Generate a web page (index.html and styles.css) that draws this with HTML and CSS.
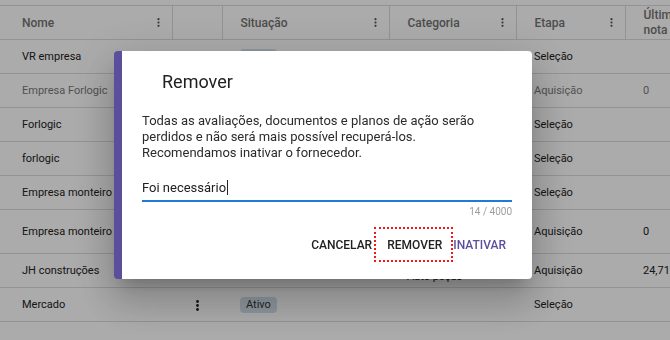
FILE: index.html
```html
<!DOCTYPE html>
<html lang="pt-BR">
<head>
    <meta charset="UTF-8">
    <meta name="viewport" content="width=device-width, initial-scale=1.0">
    <title>Fornecedores</title>
    <link rel="stylesheet" href="styles.css">
</head>
<body>
    <div class="page">
        <table class="grid">
            <colgroup>
                <col class="c-name">
                <col class="c-menu">
                <col class="c-status">
                <col class="c-cat">
                <col class="c-step">
                <col class="c-grade">
            </colgroup>
            <thead>
                <tr>
                    <th class="first"><div class="head">Nome <svg class="dots" viewBox="0 0 3 9"><circle cx="1.5" cy="1.2" r="1.1"/><circle cx="1.5" cy="4.5" r="1.1"/><circle cx="1.5" cy="7.8" r="1.1"/></svg></div></th>
                    <th></th>
                    <th><div class="head">Situação <svg class="dots" viewBox="0 0 3 9"><circle cx="1.5" cy="1.2" r="1.1"/><circle cx="1.5" cy="4.5" r="1.1"/><circle cx="1.5" cy="7.8" r="1.1"/></svg></div></th>
                    <th><div class="head">Categoria <svg class="dots" viewBox="0 0 3 9"><circle cx="1.5" cy="1.2" r="1.1"/><circle cx="1.5" cy="4.5" r="1.1"/><circle cx="1.5" cy="7.8" r="1.1"/></svg></div></th>
                    <th><div class="head">Etapa <svg class="dots" viewBox="0 0 3 9"><circle cx="1.5" cy="1.2" r="1.1"/><circle cx="1.5" cy="4.5" r="1.1"/><circle cx="1.5" cy="7.8" r="1.1"/></svg></div></th>
                    <th><div class="head-wrap">Última nota</div></th>
                </tr>
            </thead>
            <tbody>
                <tr>
                    <td class="first">VR empresa</td>
                    <td class="menu"><svg class="kebab" viewBox="0 0 3 11"><circle cx="1.5" cy="1.5" r="1.4"/><circle cx="1.5" cy="5.5" r="1.4"/><circle cx="1.5" cy="9.5" r="1.4"/></svg></td>
                    <td><span class="pill">Ativo</span></td>
                    <td>Serviços</td>
                    <td>Seleção</td>
                    <td></td>
                </tr>
                <tr class="inactive">
                    <td class="first">Empresa Forlogic</td>
                    <td class="menu"><svg class="kebab" viewBox="0 0 3 11"><circle cx="1.5" cy="1.5" r="1.4"/><circle cx="1.5" cy="5.5" r="1.4"/><circle cx="1.5" cy="9.5" r="1.4"/></svg></td>
                    <td><span class="pill">Inativo</span></td>
                    <td>Serviços</td>
                    <td>Aquisição</td>
                    <td>0</td>
                </tr>
                <tr>
                    <td class="first">Forlogic</td>
                    <td class="menu"><svg class="kebab" viewBox="0 0 3 11"><circle cx="1.5" cy="1.5" r="1.4"/><circle cx="1.5" cy="5.5" r="1.4"/><circle cx="1.5" cy="9.5" r="1.4"/></svg></td>
                    <td><span class="pill">Ativo</span></td>
                    <td>Software</td>
                    <td>Seleção</td>
                    <td></td>
                </tr>
                <tr>
                    <td class="first">forlogic</td>
                    <td class="menu"><svg class="kebab" viewBox="0 0 3 11"><circle cx="1.5" cy="1.5" r="1.4"/><circle cx="1.5" cy="5.5" r="1.4"/><circle cx="1.5" cy="9.5" r="1.4"/></svg></td>
                    <td><span class="pill">Ativo</span></td>
                    <td>Software</td>
                    <td>Seleção</td>
                    <td></td>
                </tr>
                <tr>
                    <td class="first">Empresa monteiro</td>
                    <td class="menu"><svg class="kebab" viewBox="0 0 3 11"><circle cx="1.5" cy="1.5" r="1.4"/><circle cx="1.5" cy="5.5" r="1.4"/><circle cx="1.5" cy="9.5" r="1.4"/></svg></td>
                    <td><span class="pill">Ativo</span></td>
                    <td>Materiais</td>
                    <td>Seleção</td>
                    <td></td>
                </tr>
                <tr class="tall">
                    <td class="first">Empresa monteiro</td>
                    <td class="menu"><svg class="kebab" viewBox="0 0 3 11"><circle cx="1.5" cy="1.5" r="1.4"/><circle cx="1.5" cy="5.5" r="1.4"/><circle cx="1.5" cy="9.5" r="1.4"/></svg></td>
                    <td><span class="pill">Ativo</span></td>
                    <td>Materiais de construção</td>
                    <td>Aquisição</td>
                    <td>0</td>
                </tr>
                <tr>
                    <td class="first">JH construções</td>
                    <td class="menu"><svg class="kebab" viewBox="0 0 3 11"><circle cx="1.5" cy="1.5" r="1.4"/><circle cx="1.5" cy="5.5" r="1.4"/><circle cx="1.5" cy="9.5" r="1.4"/></svg></td>
                    <td><span class="pill">Ativo</span></td>
                    <td class="low">Auto peças</td>
                    <td>Aquisição</td>
                    <td>24,71</td>
                </tr>
                <tr>
                    <td class="first">Mercado</td>
                    <td class="menu"><svg class="kebab" viewBox="0 0 3 11"><circle cx="1.5" cy="1.5" r="1.4"/><circle cx="1.5" cy="5.5" r="1.4"/><circle cx="1.5" cy="9.5" r="1.4"/></svg></td>
                    <td><span class="pill">Ativo</span></td>
                    <td></td>
                    <td>Seleção</td>
                    <td></td>
                </tr>
            </tbody>
        </table>
    </div>

    <!-- Diálogo de remoção -->
    <div class="backdrop">
        <div class="dialog">
            <h3 class="dialog-title">Remover</h3>
            <p class="dialog-text">Todas as avaliações, documentos e planos de ação serão perdidos e não será mais possível recuperá-los. Recomendamos inativar o fornecedor.</p>
            <div class="field">Foi necessário<span class="caret"></span></div>
            <div class="counter">14 / 4000</div>
            <div class="actions">
                <button class="btn">Cancelar</button>
                <button class="btn btn-focus">Remover</button>
                <button class="btn btn-primary">Inativar</button>
            </div>
        </div>
    </div>
</body>
</html>
```

FILE: styles.css
```css
body {
    margin: 0;
    width: 670px;
    height: 340px;
    overflow: hidden;
    background-color: #fff;
    font-family: Roboto, "Liberation Sans", sans-serif;
    color: #212121;
}
.page {
    padding-top: 5px;
}
.grid {
    border-collapse: collapse;
    table-layout: fixed;
    width: 720px;
}
.c-name { width: 172px; }
.c-menu { width: 50px; }
.c-status { width: 167px; }
.c-cat { width: 127px; }
.c-step { width: 109px; }
.c-grade { width: 95px; }
th {
    height: 33px;
    padding: 0 12px 0 18px;
    border-top: 1px solid #dcdcdc;
    border-bottom: 1px solid #dcdcdc;
    border-left: 1px solid #dcdcdc;
    text-align: left;
    font-size: 12px;
    font-weight: 500;
    color: #737373;
}
th.first {
    border-left: none;
    padding-left: 22px;
}
.head {
    display: flex;
    justify-content: space-between;
    align-items: center;
}
.head-wrap {
    width: 30px;
    line-height: 15px;
}
.dots {
    width: 3px;
    height: 9px;
    fill: #555;
}
td {
    height: 33px;
    padding: 0 18px;
    border-bottom: 1px solid #dcdcdc;
    font-size: 11px;
    white-space: nowrap;
    overflow: hidden;
}
td.first {
    padding-left: 22px;
}
td.menu {
    padding: 0;
    text-align: center;
}
td.low {
    height: 29px;
    padding-bottom: 4px;
    vertical-align: bottom;
    line-height: 13px;
}
.tall td {
    height: 43px;
}
.tall td:nth-child(4) {
    white-space: normal;
    line-height: 13px;
}
.inactive td {
    color: #7a7a7a;
}
.kebab {
    width: 3px;
    height: 11px;
    fill: #222;
    vertical-align: middle;
}
.pill {
    display: inline-block;
    padding: 0 6px;
    height: 16px;
    line-height: 16px;
    border-radius: 4px;
    background-color: #d2e0ec;
    color: #333;
}

.backdrop {
    position: fixed;
    inset: 0;
    padding: 51px 0 0 114px;
    background-color: rgba(0, 0, 0, 0.33);
}
.dialog {
    box-sizing: border-box;
    width: 418px;
    padding: 20px 20px 17px 20px;
    background-color: #fff;
    border-left: 8px solid #5b4f9b;
    border-radius: 4px;
    box-shadow: 0 11px 15px -7px rgba(0, 0, 0, 0.2), 0 24px 38px 3px rgba(0, 0, 0, 0.14), 0 9px 46px 8px rgba(0, 0, 0, 0.12);
}
.dialog-title {
    margin: 0 0 0 20px;
    font-size: 18px;
    line-height: 22px;
    font-weight: 400;
    color: #212121;
}
.dialog-text {
    margin: 20px 0 0;
    font-size: 13px;
    line-height: 16px;
    color: #2b2b2b;
}
.field {
    margin-top: 15px;
    height: 24px;
    line-height: 24px;
    font-size: 13px;
    color: #212121;
    border-bottom: 2px solid #1f7bd3;
}
.caret {
    display: inline-block;
    width: 1px;
    height: 15px;
    margin-left: 1px;
    vertical-align: -3px;
    background-color: #222;
}
.counter {
    margin-top: 4px;
    text-align: right;
    font-size: 10px;
    line-height: 12px;
    color: #9e9e9e;
}
.actions {
    display: flex;
    justify-content: flex-end;
    margin-top: 9px;
    padding-right: 4px;
}
.btn {
    height: 35px;
    padding: 0 2px;
    border: none;
    background: none;
    font-family: Roboto, "Liberation Sans", sans-serif;
    font-size: 12px;
    font-weight: 500;
    text-transform: uppercase;
    color: #212121;
    cursor: pointer;
}
.btn-focus {
    padding: 0 11px 0 13px;
    outline: 2px dotted #f01818;
    outline-offset: -2px;
}
.btn-primary {
    padding-left: 0;
    color: #5b4f9b;
}
```
